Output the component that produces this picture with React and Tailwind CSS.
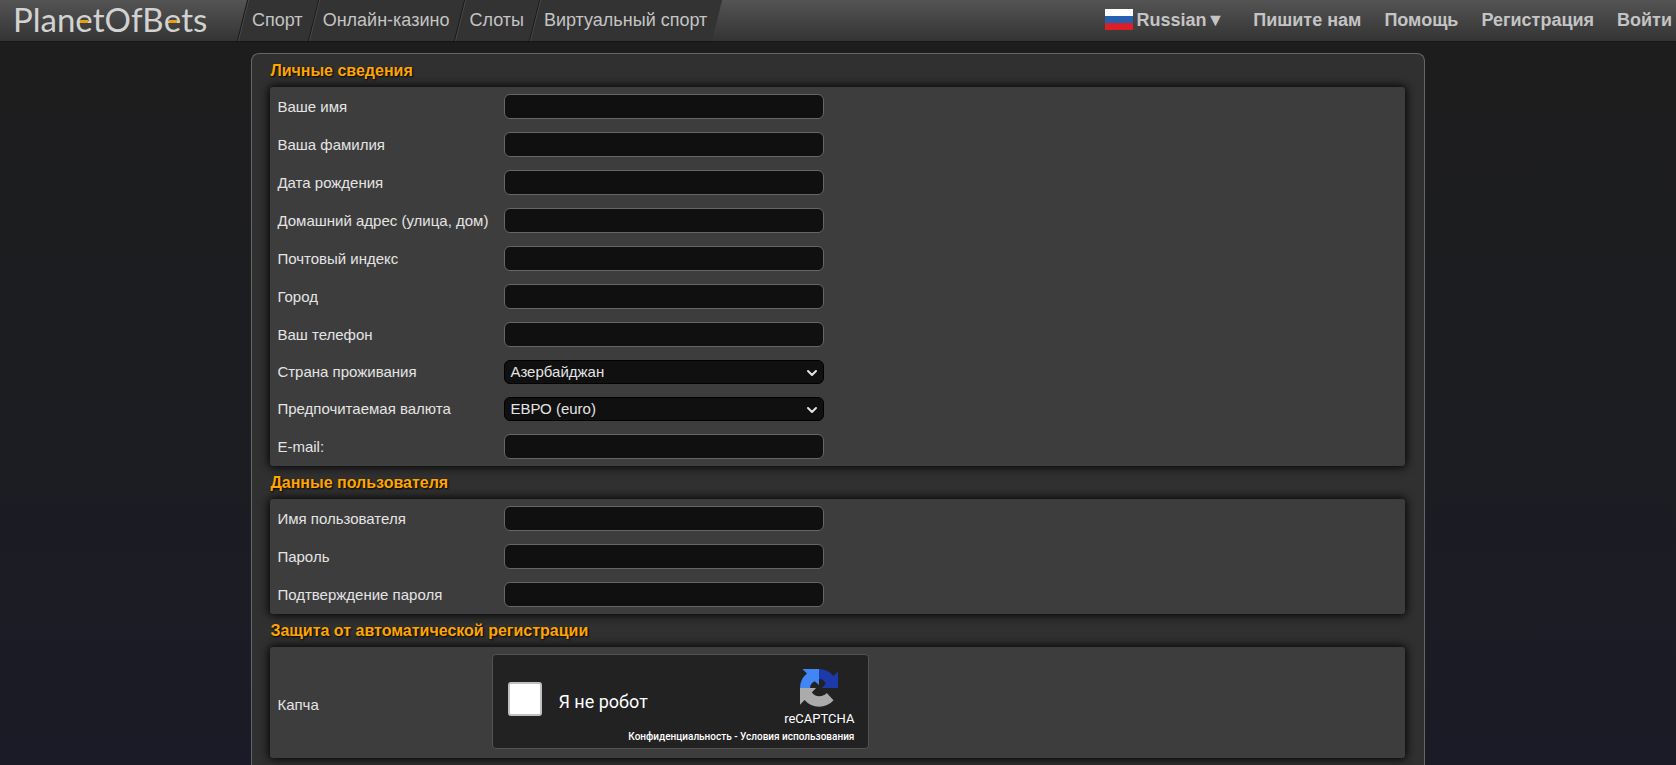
import { ChevronDown } from "lucide-react";

const nav = ["Спорт", "Онлайн-казино", "Слоты", "Виртуальный спорт"];
const account = ["Пишите нам", "Помощь", "Регистрация", "Войти"];

const personal = [
  { id: "first-name", label: "Ваше имя" },
  { id: "last-name", label: "Ваша фамилия" },
  { id: "birth-date", label: "Дата рождения" },
  { id: "address", label: "Домашний адрес (улица, дом)" },
  { id: "zip", label: "Почтовый индекс" },
  { id: "city", label: "Город" },
  { id: "phone", label: "Ваш телефон", type: "tel" },
  { id: "country", label: "Страна проживания", options: ["Азербайджан"] },
  { id: "currency", label: "Предпочитаемая валюта", options: ["ЕВРО (euro)"] },
  { id: "email", label: "E-mail:", type: "email" },
];

const credentials = [
  { id: "username", label: "Имя пользователя" },
  { id: "password", label: "Пароль", type: "password" },
  { id: "password-confirm", label: "Подтверждение пароля", type: "password" },
];

function Logo() {
  return (
    <a href="#" className="flex w-[242px] shrink-0 items-center pb-1 pl-[13px] font-['Lato',sans-serif] text-[33px] leading-9 text-[#d2d2d2]">
      <span>Plan</span>
      <LogoE />
      <span>tOfB</span>
      <LogoE />
      <span>ts</span>
    </a>
  );
}

// "e" with the orange crossbar
function LogoE() {
  return (
    <span className="relative">
      e
      <span className="absolute top-[19px] left-[5px] h-[3px] w-[8px] bg-[#e8a013]" />
    </span>
  );
}

function Flag() {
  return (
    <svg viewBox="0 0 28 21" className="h-[21px] w-7">
      <rect width="28" height="7" fill="#fdfdfd" />
      <rect y="7" width="28" height="7" fill="#2560b0" />
      <rect y="14" width="28" height="7" fill="#dc1f26" />
    </svg>
  );
}

function Header() {
  return (
    <header className="flex h-[42px] overflow-hidden border-b border-[#161616] bg-linear-to-b from-[#545454] to-[#343434] text-lg text-[#c4c4c4]">
      <Logo />
      <nav className="flex">
        {nav.map((item) => (
          <a key={item} href="#" className="relative flex items-center px-[10px] pb-0.5">
            <span className="absolute inset-0 -skew-x-14 border-l border-[#1c1c1c] bg-[#333] shadow-[inset_1px_0_0_#4c4c4c]" />
            <span className="relative">{item}</span>
          </a>
        ))}
      </nav>
      <div className="ml-auto flex items-center gap-[23px] pr-1 pb-0.5 font-bold">
        <button className="mr-1.5 flex items-center gap-[3px]">
          <Flag />
          <span>Russian▼</span>
        </button>
        {account.map((item) => (
          <a key={item} href="#">
            {item}
          </a>
        ))}
      </div>
    </header>
  );
}

function Field({ id, label, type = "text", options }) {
  return (
    <div className="flex items-center">
      <label htmlFor={id} className="w-[227px] leading-6">
        {label}
      </label>
      {options ? (
        <div className="relative">
          <select id={id} className="block h-6 w-80 appearance-none rounded-md border border-black bg-[#101010] pl-[5px] text-[15px] leading-5 text-[#e4e4e4]">
            {options.map((option) => (
              <option key={option}>{option}</option>
            ))}
          </select>
          <ChevronDown className="pointer-events-none absolute top-[5px] right-1 size-4" strokeWidth={3} />
        </div>
      ) : (
        <input id={id} type={type} className="h-[25px] w-80 rounded-md border border-[#666] bg-[#101010] px-1" />
      )}
    </div>
  );
}

function Section({ title, children }) {
  return (
    <section>
      <h2 className="h-[33px] text-base leading-[34px] font-bold text-[#ffa500] [text-shadow:1px_1px_2px_#000]">{title}</h2>
      <div className="flex flex-col gap-[13px] rounded-[3px] bg-[#3d3d3d] p-[7px] shadow-[0_0_10px_1px_#000]">{children}</div>
    </section>
  );
}

function RecaptchaLogo() {
  return (
    <svg viewBox="0 0 64 64" className="size-[38px]">
      <path fill="#1c3aa9" d="M64 32V4l-7.700 7.700A32 32 0 0 0 32 0v17c6 0 9 3 11.500 7.600L37 32z" />
      <path fill="#4285f4" d="M32 0H4l7.700 7.700A32 32 0 0 0 0 32h17c0-6 3-9 7.600-11.500L32 27z" />
      <path fill="#ababab" d="M0 32v28l7.700-7.700A32 32 0 0 0 56.500 52.500L45 40.500A16.500 16.500 0 0 1 19.800 39.400L27 32z" />
    </svg>
  );
}

function Captcha() {
  return (
    <div className="flex h-[95px] w-[377px] justify-between rounded border border-[#525252] bg-[#222] pr-[14px] pl-[15px] font-['Roboto',sans-serif] text-white">
      <div className="flex items-center gap-4 pb-1.5">
        <input id="captcha" type="checkbox" className="size-[34px] appearance-none rounded-[3px] border-2 border-[#c1c1c1] bg-white" />
        <label htmlFor="captcha" className="pt-1.5 text-lg">
          Я не робот
        </label>
      </div>
      <div className="-ml-8 flex flex-col items-end pt-[14px]">
        <div className="flex flex-col items-center">
          <RecaptchaLogo />
          <span className="text-[13px] leading-6">reCAPTCHA</span>
        </div>
        <div className="text-[10px] leading-3 font-medium whitespace-nowrap">
          <a href="#">Конфиденциальность</a> - <a href="#">Условия использования</a>
        </div>
      </div>
    </div>
  );
}

export default function App() {
  return (
    <div className="flex min-h-screen flex-col bg-linear-to-b from-[#1d1d1d] via-[#1c1d21] to-[#1b1b27] font-['Liberation_Sans',Arial,sans-serif] text-[15px] text-[#e4e4e4]">
      <Header />
      <main className="mx-auto mt-[11px] w-[70%] grow rounded-t-lg border border-b-0 border-[#666] bg-[#303030] pr-[19px] pl-[18px]">
        <form>
          <Section title="Личные сведения">
            {personal.map((field) => (
              <Field key={field.id} {...field} />
            ))}
          </Section>
          <Section title="Данные пользователя">
            {credentials.map((field) => (
              <Field key={field.id} {...field} />
            ))}
          </Section>
          <Section title="Защита от автоматической регистрации">
            <div className="flex items-end pb-0.5">
              <label htmlFor="captcha" className="w-[215px] pb-8 leading-6">
                Капча
              </label>
              <Captcha />
            </div>
          </Section>
        </form>
      </main>
    </div>
  );
}
